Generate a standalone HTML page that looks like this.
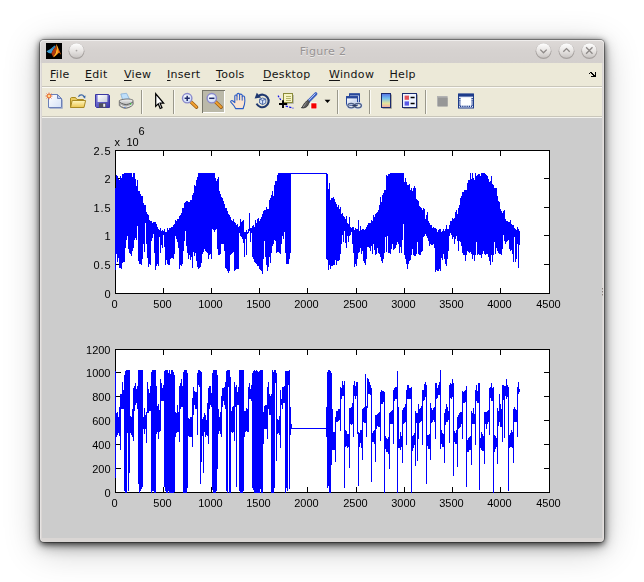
<!DOCTYPE html>
<html><head><meta charset="utf-8"><title>Figure 2</title>
<style>
html,body{margin:0;padding:0;background:#fff;}
body{width:644px;height:582px;overflow:hidden;position:relative;font-family:"DejaVu Sans","Liberation Sans",sans-serif;}
.win{position:absolute;left:40px;top:40px;width:564px;height:502px;border-radius:4px;background:#dad6d4;
 box-shadow:0 0 0 1px rgba(0,0,0,.30),0 1.5px 6px rgba(0,0,0,.75),0 4px 14px rgba(0,0,0,.36),0 7px 36px rgba(0,0,0,.23);overflow:hidden;}
.win:after{content:"";position:absolute;left:0;top:0;right:0;bottom:0;border-radius:4px;box-shadow:inset 0 1px 0 0 rgba(255,255,255,.55), inset 1px 0 0 0 rgba(255,255,255,.35), inset -1px 0 0 0 rgba(255,255,255,.25);pointer-events:none;}
.title{position:absolute;left:0;top:0;width:564px;height:23px;background:linear-gradient(#dedad8,#d6d2d0 45%,#d3cfcd);}
.title .t{position:absolute;left:0;right:0;top:5px;text-align:center;padding-left:2px;font-size:11px;letter-spacing:.3px;color:#979393;line-height:14px;text-shadow:0 1px 0 rgba(255,255,255,.55);}
.menubar{position:absolute;left:2px;top:23px;width:560px;height:23px;background:#ece9d8;}
.mi{position:absolute;top:5px;font-size:11px;letter-spacing:.3px;line-height:14px;color:#141414;white-space:nowrap;}
.mi u{text-decoration:underline;text-underline-offset:2px;text-decoration-thickness:1px;}
.sep1{position:absolute;left:2px;top:46px;width:560px;height:1px;background:#c9c6ba;}
.sep1b{position:absolute;left:2px;top:47px;width:560px;height:1px;background:#fbfaf6;}
.toolbar{position:absolute;left:2px;top:48px;width:560px;height:28px;background:#ece9d8;}
.sep2{position:absolute;left:2px;top:76px;width:560px;height:1px;background:#c9c6ba;}
.sep2b{position:absolute;left:2px;top:77px;width:560px;height:1px;background:#f4f3ee;}
.fig{position:absolute;left:2px;top:78px;width:560px;height:420px;background:#ccc;}
.plots{position:absolute;left:0;top:0;will-change:transform;}
.tb{position:absolute;left:0;top:0;}
</style></head><body>
<div class="win">
 <div class="title"><div class="t">Figure 2</div></div>
 <div class="menubar"><span class="mi" style="left:8px"><u>F</u>ile</span><span class="mi" style="left:43px"><u>E</u>dit</span><span class="mi" style="left:82px"><u>V</u>iew</span><span class="mi" style="left:125px"><u>I</u>nsert</span><span class="mi" style="left:174px"><u>T</u>ools</span><span class="mi" style="left:221px"><u>D</u>esktop</span><span class="mi" style="left:287px"><u>W</u>indow</span><span class="mi" style="left:347.5px"><u>H</u>elp</span></div>
 <div class="sep1"></div><div class="sep1b"></div>
 <div class="toolbar"></div>
 <div class="sep2"></div><div class="sep2b"></div>
 <div class="fig"></div>
</div>
<svg class="tb" width="644" height="582" viewBox="0 0 644 582">
<defs>
 <linearGradient id="gBtn" x1="0" y1="0" x2="0" y2="1"><stop offset="0" stop-color="#ffffff"/><stop offset=".55" stop-color="#e6e3e1"/><stop offset="1" stop-color="#c9c5c3"/></linearGradient>
 <linearGradient id="gPage" x1="0" y1="0" x2="1" y2="1"><stop offset="0" stop-color="#ffffff"/><stop offset="1" stop-color="#d4e0f6"/></linearGradient>
 <linearGradient id="gFold" x1="0" y1="0" x2="0" y2="1"><stop offset="0" stop-color="#fff8c0"/><stop offset="1" stop-color="#ecc650"/></linearGradient>
 <linearGradient id="gSave" x1="0" y1="0" x2="1" y2="1"><stop offset="0" stop-color="#8482e2"/><stop offset="1" stop-color="#3c38a6"/></linearGradient>
 <linearGradient id="gLbl" x1="0" y1="0" x2="1" y2="1"><stop offset="0" stop-color="#ffffff"/><stop offset="1" stop-color="#c8ccdc"/></linearGradient>
 <linearGradient id="gPrn" x1="0" y1="0" x2="0" y2="1"><stop offset="0" stop-color="#f4f4f4"/><stop offset="1" stop-color="#8c8c8c"/></linearGradient>
 <radialGradient id="gLens" cx=".4" cy=".35" r=".7"><stop offset="0" stop-color="#ffffff"/><stop offset="1" stop-color="#c4d4f6"/></radialGradient>
 <linearGradient id="gCbar" x1="0" y1="0" x2="0" y2="1"><stop offset="0" stop-color="#5470e6"/><stop offset=".35" stop-color="#74c0ee"/><stop offset=".7" stop-color="#e4e49c"/><stop offset="1" stop-color="#f2a6a6"/></linearGradient>
 <linearGradient id="gWin" x1="0" y1="0" x2="1" y2="1"><stop offset="0" stop-color="#ffffff"/><stop offset="1" stop-color="#b8c8e8"/></linearGradient>
 <linearGradient id="gMl" x1="0" y1="0" x2="1" y2="1"><stop offset="0" stop-color="#c8400c"/><stop offset=".5" stop-color="#ee7414"/><stop offset="1" stop-color="#a02808"/></linearGradient>
</defs>

<!-- title bar: matlab icon -->
<rect x="46" y="43" width="16" height="16" fill="#000"/>
<path d="M46.5 51.3L50.5 49.1L54.8 45.4L55.6 46.6L53 50L51.4 53.4L48.6 53.1Z" fill="#3a9bd2"/>
<path d="M50.5 49.1L54.8 45.4L53.4 48.6Z" fill="#2b78a8"/>
<path d="M51.4 53.4L53 50L55.6 46.6L56.4 44.1L56.7 48L55.6 53L53.3 57.2Z" fill="#b0380e"/>
<path d="M56.4 44.1C57.6 46.5 59.5 51 61.1 54.7C60.4 54 59.8 53 59.2 52.5C57.8 53.5 56.5 56 53.3 57.2L55.6 53L56.7 48Z" fill="#ee7a16"/>
<path d="M56.4 44.1L57.1 48.4L56 53L53.3 57.2L55 55.9L57.5 52.6L57.8 48Z" fill="#ffc62a"/>
<path d="M58.2 48.6C59 50.6 60 52.6 61.1 54.7C60.4 54 59.8 53 59.2 52.5Z" fill="#c24a0e"/>

<!-- title bar round buttons -->
<g>
 <circle cx="76.5" cy="51.2" r="7.9" fill="#a5a09e"/>
 <circle cx="76.5" cy="50.5" r="7.3" fill="url(#gBtn)"/>
 <circle cx="76.5" cy="50.6" r="0.9" fill="#a9a5a3"/>
 <circle cx="543.5" cy="51.2" r="7.9" fill="#a5a09e"/><circle cx="543.5" cy="50.5" r="7.3" fill="url(#gBtn)"/>
 <circle cx="566.5" cy="51.2" r="7.9" fill="#a5a09e"/><circle cx="566.5" cy="50.5" r="7.3" fill="url(#gBtn)"/>
 <circle cx="589.3" cy="51.2" r="7.9" fill="#a5a09e"/><circle cx="589.3" cy="50.5" r="7.3" fill="url(#gBtn)"/>
 <path d="M540.3 49.6 L543.5 52.8 L546.7 49.6" fill="none" stroke="#8d8987" stroke-width="1.3"/>
 <path d="M563.3 51.8 L566.5 48.6 L569.7 51.8" fill="none" stroke="#8d8987" stroke-width="1.3"/>
 <path d="M586.1 47.3 L592.5 53.7 M592.5 47.3 L586.1 53.7" fill="none" stroke="#8d8987" stroke-width="1.3"/>
</g>

<!-- menubar right arrow -->
<path shape-rendering="crispEdges" fill="#000" d="M590 72h2v1h-2zM589 73h1v1h-1zM591 73h2v1h-2zM592 74h2v1h-2zM593 75h2v1h-2zM595 72h1v5h-1zM591 76h5v1h-5z"/>
<!-- separators -->
<g stroke="#9a988b" stroke-width="1" shape-rendering="crispEdges">
 <path d="M141.5 90V114M173.5 90V114M337.5 90V114M369.5 90V114M425.5 90V114"/>
</g>
<g stroke="#fbfaf4" stroke-width="1" shape-rendering="crispEdges">
 <path d="M142.5 90V114M174.5 90V114M338.5 90V114M370.5 90V114M426.5 90V114"/>
</g>

<!-- New -->
<g>
 <path d="M49.5 108.5H62.5V99.5" fill="none" stroke="#aeb6cc" stroke-width="1"/>
 <path d="M48.5 94.5H57.5L61.5 98.5V107.5H48.5Z" fill="url(#gPage)" stroke="#6b80b8" stroke-width="1"/>
 <path d="M57.5 94.5V98.5H61.5Z" fill="#b9c8ea" stroke="#6b80b8" stroke-width="1" stroke-linejoin="round"/>
 <g stroke="#e4583a" stroke-width=".9"><path d="M49 92.6V99.4M45.6 96H52.4M46.6 93.6L51.4 98.4M51.4 93.6L46.6 98.4"/></g>
 <circle cx="49" cy="96" r="1.8" fill="#ffd79a" stroke="#ee7a2a" stroke-width=".9"/>
</g>

<!-- Open -->
<g>
 <path d="M70.5 107.5V98.2L71.5 97.5H75.5L77 99.5H83.5V102" fill="#e9c95e" stroke="#a98a22" stroke-width="1" stroke-linejoin="round"/>
 <path d="M70.5 107.5L72.2 100.5H85.6L84 107.5Z" fill="url(#gFold)" stroke="#a98a22" stroke-width="1" stroke-linejoin="round"/>
 <path d="M78.4 96.8C79.6 94.4 82.8 94.2 84 96.6" fill="none" stroke="#3a66a8" stroke-width="1.1"/>
 <path d="M82.6 96.6L85.6 95.4L85.1 98.8Z" fill="#3a66a8"/>
</g>

<!-- Save -->
<g>
 <path d="M95.5 94.5H108.5L109.5 95.5V107.5H96.5L95.5 106.5Z" fill="url(#gSave)" stroke="#3a36a0" stroke-width="1"/>
 <rect x="97.6" y="95" width="9.8" height="7" fill="url(#gLbl)"/>
 <rect x="99" y="103.2" width="7" height="4.4" fill="#50505e"/>
 <rect x="103.2" y="103.8" width="2" height="3" fill="#e8e8f0"/>
</g>

<!-- Print -->
<g>
 <path d="M122.6 99.6L120.8 94L126.6 93.3L129.4 99Z" fill="#bfe0fb" stroke="#86aed6" stroke-width=".8"/>
 <path d="M119.3 100.6C121.5 99 130.5 98.2 133 100.2L133.2 104.4C131 107.3 127 108.4 124.6 108.3C122.5 107.8 120.4 106.8 119.3 105.6Z" fill="url(#gPrn)" stroke="#6e6e6e" stroke-width=".9"/>
 <path d="M119.6 102.2C122 104 125 104.6 126.4 104.6C129 104.2 131.6 103 133 101.8" fill="none" stroke="#5c5c5c" stroke-width="1"/>
 <path d="M121 105.3C123 106.5 125 106.9 126.3 106.9C128.6 106.5 130.6 105.6 132 104.6" fill="none" stroke="#f4f4f4" stroke-width=".9"/>
 <circle cx="130.6" cy="103.9" r=".8" fill="#38c03c"/>
 <circle cx="124.8" cy="107.4" r=".7" fill="#4a78d8"/>
</g>

<!-- Arrow cursor -->
<path d="M155.7 93.8V106.4L158.3 103.9L160.2 108.5L162 107.7L160.1 103.2H163.6Z" fill="#fff" stroke="#000" stroke-width="1.25" stroke-linejoin="miter"/>

<!-- Zoom in -->
<g>
 <path d="M190.8 101.8L196.6 107.2" stroke="#9a5a10" stroke-width="3.4" stroke-linecap="round"/>
 <path d="M190.8 101.8L196.4 107" stroke="#f0a030" stroke-width="2" stroke-linecap="round"/>
 <circle cx="187.2" cy="98.2" r="4.7" fill="url(#gLens)" stroke="#8a8acc" stroke-width="1.4"/>
 <path d="M184.6 98.3H189.8M187.2 95.7V100.9" stroke="#1e2a6a" stroke-width="1.5"/>
</g>

<!-- Zoom out (pressed) -->
<g shape-rendering="crispEdges">
 <rect x="202" y="90" width="23" height="23" fill="#bbb9a9"/>
 <path d="M202.5 113V90.5H225" fill="none" stroke="#77766a" stroke-width="1"/>
 <path d="M203 112.5H224.5V91" fill="none" stroke="#ffffff" stroke-width="1"/>
</g>
<g>
 <path d="M215.4 101.8L221.2 107.2" stroke="#9a5a10" stroke-width="3.4" stroke-linecap="round"/>
 <path d="M215.4 101.8L221 107" stroke="#f0a030" stroke-width="2" stroke-linecap="round"/>
 <circle cx="211.8" cy="98.2" r="4.7" fill="url(#gLens)" stroke="#8a8acc" stroke-width="1.4"/>
 <path d="M209.2 98.3H214.4" stroke="#1e2a6a" stroke-width="1.5"/>
</g>

<!-- Pan hand -->
<path d="M235.6 108.6C234.6 106.4 232.4 103.8 230.8 102.2C230.2 101.2 231.4 100.2 232.6 100.8L234.8 102.6V96C234.8 94.6 236.8 94.6 237 96V94.4C237.2 93 239.4 93 239.6 94.4V95C239.8 93.8 241.8 93.8 242.2 95.2V96.6C242.6 95.6 244.4 95.8 244.6 97.2C245 100 245.2 102.4 244.4 104.6C244 105.8 243.4 107.2 243.2 108.6Z" fill="#fbe4cf" stroke="#2a5cc6" stroke-width="1.1" stroke-linejoin="round"/>
<path d="M237 96V100.4M239.6 95V100.2M242.2 96.6V100.6" stroke="#2a5cc6" stroke-width="1" fill="none"/>

<!-- Rotate 3D -->
<g>
 <path d="M258.2 96.2A6.3 6.3 0 1 1 256.6 103.6" fill="none" stroke="#1f3870" stroke-width="2.1"/>
 <path d="M254.6 98.4L256.8 92.8L261.2 97.4Z" fill="#1f3870"/>
 <path d="M259.6 99.2L262.6 98L265.8 99.2V103L262.6 104.6L259.6 103Z" fill="#dbe6fa" stroke="#3e5ea0" stroke-width=".9" stroke-linejoin="round"/>
 <path d="M259.6 99.2L262.6 100.4L265.8 99.2M262.6 100.4V104.6" fill="none" stroke="#3e5ea0" stroke-width=".9"/>
</g>

<!-- Data cursor -->
<g>
 <path d="M285 103.5H293.5V95" fill="none" stroke="#b9b9b0" stroke-width="1"/>
 <rect x="283.5" y="93.5" width="9" height="9" fill="#f6f4c4" stroke="#8a8a3a" stroke-width="1"/>
 <path d="M285.5 96.1H290.5M285.5 98.1H290.5M285.5 100.1H290.5" stroke="#a2a250" stroke-width=".8" shape-rendering="crispEdges"/>
 <path d="M278 95.6L281.4 101" stroke="#0a0aee" stroke-width="1.1" stroke-dasharray="2 1.2"/>
 <path d="M285.6 106L293.4 108.2" stroke="#0a0aee" stroke-width="1.1" stroke-dasharray="2.4 1.2"/>
 <path d="M279 104H287.2M283 100.2V108" stroke="#000" stroke-width="1.9"/>
</g>

<!-- Brush -->
<g>
 <path d="M315.8 93.8L308.6 101.2" stroke="#3b5fc0" stroke-width="3.2" stroke-linecap="round"/>
 <path d="M315.2 93.8L308.6 100.6" stroke="#b9c9f4" stroke-width="1" stroke-linecap="round"/>
 <path d="M309.4 101.8L307.6 100.2L305.8 102C303.6 103.4 303.4 106 301.4 107.8C304.4 108.6 307.8 106.8 308.4 104.2Z" fill="#5a5a5a" stroke="#2e2e2e" stroke-width=".8" stroke-linejoin="round"/>
 <path d="M306.4 102.8C304.8 104 304.4 105.8 303.2 107" fill="none" stroke="#a6a6a6" stroke-width=".8"/>
 <rect x="310.5" y="102.5" width="6.5" height="6.5" fill="#fff"/>
 <rect x="311.3" y="103.3" width="5.2" height="5.2" fill="#f40000"/>
</g>
<path d="M324.6 99.8H330.4L327.5 102.9Z" fill="#000"/>

<!-- Link plots -->
<g>
 <rect x="349.5" y="93.8" width="10" height="8.6" fill="#c9d6ef" stroke="#27479a" stroke-width="1"/>
 <rect x="349.5" y="93.6" width="10" height="1.9" fill="#27479a"/>
 <rect x="346.5" y="96.6" width="11" height="8.6" fill="url(#gWin)" stroke="#27479a" stroke-width="1"/>
 <rect x="346.5" y="96.4" width="11" height="2" fill="#27479a"/>
 <ellipse cx="351.2" cy="105.6" rx="3.4" ry="2.3" fill="none" stroke="#d9e2f2" stroke-width="2.6"/>
 <ellipse cx="358" cy="105.6" rx="3.4" ry="2.3" fill="none" stroke="#d9e2f2" stroke-width="2.6"/>
 <ellipse cx="351.2" cy="105.6" rx="3.4" ry="2.3" fill="none" stroke="#4d5f88" stroke-width="1.3"/>
 <ellipse cx="358" cy="105.6" rx="3.4" ry="2.3" fill="none" stroke="#4d5f88" stroke-width="1.3"/>
 <path d="M352.4 105.6H356.8" stroke="#2c3a5e" stroke-width="1.5"/>
</g>

<!-- Colorbar -->
<g>
 <path d="M382.5 108.5H391.5V94.5" fill="none" stroke="#a9a79b" stroke-width="1"/>
 <rect x="381.5" y="93.5" width="9" height="14" fill="url(#gCbar)" stroke="#1b2a6e" stroke-width="1"/>
</g>
<!-- Legend -->
<g>
 <path d="M403.5 108.5H417.5V94.5" fill="none" stroke="#a9a79b" stroke-width="1"/>
 <rect x="402.5" y="93.5" width="14" height="14" fill="#eef3ff" stroke="#1b2a6e" stroke-width="1"/>
 <rect x="404.6" y="95.6" width="4.4" height="4.2" fill="#e4525a"/>
 <rect x="404.6" y="101.4" width="4.4" height="4.2" fill="#5a5ae6"/>
 <path d="M410.6 97.6H414.6M410.6 103.6H414.6" stroke="#000" stroke-width="1.5"/>
</g>
<!-- Hide plot tools (disabled look) -->
<g>
 <rect x="437" y="96" width="10.6" height="10.4" fill="#b2b2b2"/>
 <rect x="438" y="97.6" width="9.6" height="8.8" fill="#979797"/>
</g>
<!-- Show plot tools -->
<g>
 <rect x="458.5" y="94" width="15" height="14" fill="#dfe6f6" stroke="#1d3b8a" stroke-width="1"/>
 <rect x="458.5" y="93.8" width="15" height="2.8" fill="#1d3b8a"/>
 <rect x="461" y="97.6" width="10" height="7.6" fill="#ffffff"/>
 <path d="M459.8 98V106M472.2 98V106" stroke="#1d3b8a" stroke-width="1.4" stroke-dasharray="1.2 1"/>
 <path d="M460 106.4H472" stroke="#1d3b8a" stroke-width="1.4" stroke-dasharray="1.2 1"/>
</g>
<!-- resize grip dots -->
<g fill="#8a807c"><rect x="602" y="288" width="1" height="1.4"/><rect x="602" y="291" width="1" height="1.4"/><rect x="602" y="294" width="1" height="1.4"/></g>
</svg>

<svg class="plots" width="644" height="582" viewBox="0 0 644 582" shape-rendering="crispEdges" font-family="Liberation Sans, Arial, sans-serif" font-size="11" fill="#000">
<rect x="115" y="150" width="435" height="144" fill="#fff"/>
<path d="M115.5 150V294M549.5 150V294M115 150.5H550M115 293.5H550M115.5 288V293M115.5 151V156M163.5 288V293M163.5 151V156M211.5 288V293M211.5 151V156M259.5 288V293M259.5 151V156M307.5 288V293M307.5 151V156M356.5 288V293M356.5 151V156M404.5 288V293M404.5 151V156M452.5 288V293M452.5 151V156M500.5 288V293M500.5 151V156M549.5 288V293M549.5 151V156M116 293.5H121M544 293.5H549M116 264.5H121M544 264.5H549M116 235.5H121M544 235.5H549M116 207.5H121M544 207.5H549M116 178.5H121M544 178.5H549M116 150.5H121M544 150.5H549" stroke="#000" stroke-width="1" fill="none"/>
<path d="M115.5 188V270M116.5 175V254M117.5 176V262M118.5 179V258M119.5 180V268M120.5 176V268M121.5 178V269M122.5 174V263M123.5 174V262M124.5 173V262M125.5 173V248M126.5 173V240M127.5 173V236M128.5 173V249M129.5 173V253M130.5 173V254M131.5 173V256M132.5 177V251M133.5 173V248M134.5 173V240M135.5 179V238M136.5 186V240M137.5 180V226M138.5 191V261M139.5 191V264M140.5 194V264M141.5 196V265M142.5 196V259M143.5 203V244M144.5 205V252M145.5 205V223M146.5 212V244M147.5 214V258M148.5 215V267M149.5 220V264M150.5 221V265M151.5 221V241M152.5 223V238M153.5 222V234M154.5 222V253M155.5 222V270M156.5 224V266M157.5 227V264M158.5 229V266M159.5 230V237M160.5 228V253M161.5 231V245M162.5 230V248M163.5 231V235M164.5 229V247M165.5 232V265M166.5 232V260M167.5 228V264M168.5 230V265M169.5 228V265M170.5 228V259M171.5 227V258M172.5 227V258M173.5 225V259M174.5 224V254M175.5 220V236M176.5 221V239M177.5 219V242M178.5 219V248M179.5 216V269M180.5 215V265M181.5 213V266M182.5 208V264M183.5 208V251M184.5 203V241M185.5 202V231M186.5 201V246M187.5 201V253M188.5 202V259M189.5 202V255M190.5 200V260M191.5 200V257M192.5 195V268M193.5 193V252M194.5 185V256M195.5 186V253M196.5 180V261M197.5 177V267M198.5 173V269M199.5 173V268M200.5 173V267M201.5 173V263M202.5 173V254M203.5 173V252M204.5 173V249M205.5 173V251M206.5 173V252M207.5 173V253M208.5 173V259M209.5 173V255M210.5 173V254M211.5 173V259M212.5 173V229M213.5 173V230M214.5 173V232M215.5 178V230M216.5 181V229M217.5 179V249M218.5 177V255M219.5 191V255M220.5 194V254M221.5 197V244M222.5 198V244M223.5 201V244M224.5 204V251M225.5 208V268M226.5 208V269M227.5 211V271M228.5 214V273M229.5 215V271M230.5 217V255M231.5 220V254M232.5 221V253M233.5 219V252M234.5 222V271M235.5 223V270M236.5 225V269M237.5 224V269M238.5 227V269M239.5 226V233M240.5 219V236M241.5 222V237M242.5 221V239M243.5 220V243M244.5 232V257M245.5 232V239M246.5 230V255M247.5 232V234M248.5 229V233M249.5 213V231M250.5 228V242M251.5 228V233M252.5 226V257M253.5 225V259M254.5 227V262M255.5 220V263M256.5 223V264M257.5 219V266M258.5 218V266M259.5 221V269M260.5 219V270M261.5 217V271M262.5 214V274M263.5 211V259M264.5 210V241M265.5 210V257M266.5 207V265M267.5 209V271M268.5 209V267M269.5 200V257M270.5 198V263M271.5 195V253M272.5 191V246M273.5 196V244M274.5 185V240M275.5 181V241M276.5 181V253M277.5 175V252M278.5 173V252M279.5 173V253M280.5 173V254M281.5 173V244M282.5 173V236M283.5 173V239M284.5 173V232M285.5 173V253M286.5 173V264M287.5 173V264M288.5 173V264M289.5 173V259M290.5 173V253M291.5 173V174M292.5 173V174M293.5 173V174M294.5 173V174M295.5 173V174M296.5 173V174M297.5 173V174M298.5 173V174M299.5 173V174M300.5 173V174M301.5 173V174M302.5 173V174M303.5 173V174M304.5 173V174M305.5 173V174M306.5 173V174M307.5 173V174M308.5 173V174M309.5 173V174M310.5 173V174M311.5 173V174M312.5 173V174M313.5 173V174M314.5 173V174M315.5 173V174M316.5 173V174M317.5 173V174M318.5 173V174M319.5 173V174M320.5 173V174M321.5 173V174M322.5 173V174M323.5 173V174M324.5 173V174M325.5 173V174M326.5 173V259M327.5 174V260M328.5 189V270M329.5 183V265M330.5 200V269M331.5 198V266M332.5 198V266M333.5 197V265M334.5 199V265M335.5 202V260M336.5 204V265M337.5 207V261M338.5 205V261M339.5 209V260M340.5 207V254M341.5 214V244M342.5 213V235M343.5 216V242M344.5 217V231M345.5 219V243M346.5 216V248M347.5 223V236M348.5 224V242M349.5 217V236M350.5 227V235M351.5 228V232M352.5 227V244M353.5 227V253M354.5 230V267M355.5 228V264M356.5 229V266M357.5 229V259M358.5 220V253M359.5 231V252M360.5 226V248M361.5 230V254M362.5 229V251M363.5 229V261M364.5 230V263M365.5 229V265M366.5 227V259M367.5 225V247M368.5 223V247M369.5 223V248M370.5 223V251M371.5 220V246M372.5 221V254M373.5 215V244M374.5 217V250M375.5 214V255M376.5 213V254M377.5 212V248M378.5 210V253M379.5 205V254M380.5 197V257M381.5 202V261M382.5 195V263M383.5 193V259M384.5 190V253M385.5 190V237M386.5 175V252M387.5 176V236M388.5 174V253M389.5 174V253M390.5 173V254M391.5 173V249M392.5 173V244M393.5 173V250M394.5 173V249M395.5 173V248M396.5 173V245M397.5 173V242M398.5 173V244M399.5 173V253M400.5 173V247M401.5 173V253M402.5 173V240M403.5 173V224M404.5 182V255M405.5 178V259M406.5 182V264M407.5 185V269M408.5 185V264M409.5 184V261M410.5 190V260M411.5 188V255M412.5 191V249M413.5 188V255M414.5 186V256M415.5 188V256M416.5 199V254M417.5 200V242M418.5 201V254M419.5 206V255M420.5 207V255M421.5 208V252M422.5 210V251M423.5 208V237M424.5 209V236M425.5 219V234M426.5 215V236M427.5 212V238M428.5 221V241M429.5 223V246M430.5 225V244M431.5 225V245M432.5 228V245M433.5 227V244M434.5 228V248M435.5 228V272M436.5 229V270M437.5 232V271M438.5 230V271M439.5 229V269M440.5 229V271M441.5 232V258M442.5 231V260M443.5 229V254M444.5 231V259M445.5 229V264M446.5 225V266M447.5 229V259M448.5 229V251M449.5 225V236M450.5 221V233M451.5 221V235M452.5 218V239M453.5 219V237M454.5 218V244M455.5 212V239M456.5 210V236M457.5 214V241M458.5 208V251M459.5 205V241M460.5 198V242M461.5 196V246M462.5 192V253M463.5 192V255M464.5 190V255M465.5 190V261M466.5 190V255M467.5 183V251M468.5 180V252M469.5 180V253M470.5 173V252M471.5 179V254M472.5 173V259M473.5 178V255M474.5 180V261M475.5 173V255M476.5 176V242M477.5 175V255M478.5 174V254M479.5 174V255M480.5 176V255M481.5 173V258M482.5 173V254M483.5 173V251M484.5 173V254M485.5 174V255M486.5 175V254M487.5 176V254M488.5 179V257M489.5 182V261M490.5 181V265M491.5 176V255M492.5 184V262M493.5 185V255M494.5 188V242M495.5 188V254M496.5 188V248M497.5 196V251M498.5 201V253M499.5 202V254M500.5 209V254M501.5 211V255M502.5 213V249M503.5 211V235M504.5 210V241M505.5 219V244M506.5 221V242M507.5 221V241M508.5 222V240M509.5 222V249M510.5 220V251M511.5 224V250M512.5 225V254M513.5 225V262M514.5 228V237M515.5 229V262M516.5 230V259M517.5 227V244M518.5 229V268M519.5 231V245" stroke="#00f" stroke-width="1" fill="none"/>
<text x="114.5" y="307.6" text-anchor="middle">0</text>
<text x="162.5" y="307.6" text-anchor="middle">500</text>
<text x="210.5" y="307.6" text-anchor="middle">1000</text>
<text x="258.5" y="307.6" text-anchor="middle">1500</text>
<text x="306.5" y="307.6" text-anchor="middle">2000</text>
<text x="355.5" y="307.6" text-anchor="middle">2500</text>
<text x="403.5" y="307.6" text-anchor="middle">3000</text>
<text x="451.5" y="307.6" text-anchor="middle">3500</text>
<text x="499.5" y="307.6" text-anchor="middle">4000</text>
<text x="548.5" y="307.6" text-anchor="middle">4500</text>
<text x="110.5" y="297.8" text-anchor="end">0</text>
<text x="110.5" y="268.8" text-anchor="end">0<tspan dx="0.9">.</tspan><tspan dx="0.9">5</tspan></text>
<text x="110.5" y="239.8" text-anchor="end">1</text>
<text x="110.5" y="211.8" text-anchor="end">1<tspan dx="0.9">.</tspan><tspan dx="0.9">5</tspan></text>
<text x="110.5" y="182.8" text-anchor="end">2</text>
<text x="110.5" y="154.8" text-anchor="end">2<tspan dx="0.9">.</tspan><tspan dx="0.9">5</tspan></text>
<text x="114.5" y="146">x</text><text x="126.4" y="146">10</text><text x="138.5" y="134.5">6</text>
<rect x="115" y="349" width="435" height="144" fill="#fff"/>
<path d="M115.5 349V493M549.5 349V493M115 349.5H550M115 492.5H550M115.5 487V492M115.5 350V355M163.5 487V492M163.5 350V355M211.5 487V492M211.5 350V355M259.5 487V492M259.5 350V355M307.5 487V492M307.5 350V355M356.5 487V492M356.5 350V355M404.5 487V492M404.5 350V355M452.5 487V492M452.5 350V355M500.5 487V492M500.5 350V355M549.5 487V492M549.5 350V355M116 492.5H121M544 492.5H549M116 468.5H121M544 468.5H549M116 444.5H121M544 444.5H549M116 420.5H121M544 420.5H549M116 396.5H121M544 396.5H549M116 372.5H121M544 372.5H549M116 349.5H121M544 349.5H549" stroke="#000" stroke-width="1" fill="none"/>
<path d="M115.5 371V478M116.5 413V437M117.5 412V435M118.5 417V433M119.5 407V436M120.5 394V450M121.5 394V409M122.5 382V409M123.5 390V409M124.5 375V491M125.5 371V493M126.5 370V493M127.5 370V433M128.5 370V491M129.5 370V473M130.5 416V433M131.5 417V435M132.5 409V437M133.5 388V441M134.5 386V411M135.5 383V405M136.5 389V403M137.5 386V409M138.5 370V484M139.5 370V493M140.5 370V491M141.5 370V489M142.5 370V487M143.5 417V429M144.5 408V434M145.5 415V429M146.5 412V443M147.5 382V413M148.5 389V413M149.5 393V411M150.5 386V411M151.5 372V493M152.5 370V491M153.5 370V491M154.5 370V493M155.5 370V493M156.5 386V434M157.5 406V432M158.5 404V439M159.5 410V432M160.5 379V431M161.5 383V401M162.5 388V401M163.5 385V401M164.5 371V487M165.5 370V491M166.5 370V493M167.5 370V493M168.5 373V491M169.5 370V493M170.5 374V493M171.5 370V493M172.5 370V493M173.5 372V493M174.5 375V492M175.5 412V437M176.5 413V433M177.5 405V432M178.5 412V432M179.5 386V442M180.5 383V409M181.5 379V407M182.5 386V407M183.5 372V493M184.5 370V493M185.5 370V493M186.5 370V493M187.5 373V488M188.5 418V436M189.5 419V437M190.5 417V437M191.5 417V437M192.5 398V447M193.5 387V415M194.5 391V405M195.5 392V409M196.5 392V409M197.5 373V435M198.5 370V385M199.5 370V387M200.5 371V484M201.5 372V462M202.5 419V436M203.5 417V473M204.5 413V432M205.5 415V437M206.5 420V435M207.5 403V436M208.5 388V444M209.5 386V409M210.5 386V405M211.5 393V407M212.5 373V490M213.5 370V493M214.5 370V493M215.5 370V493M216.5 370V491M217.5 375V469M218.5 409V434M219.5 417V431M220.5 412V434M221.5 396V437M222.5 388V407M223.5 388V401M224.5 387V405M225.5 382V409M226.5 371V491M227.5 370V493M228.5 370V387M229.5 370V493M230.5 377V493M231.5 411V432M232.5 407V433M233.5 406V432M234.5 382V441M235.5 387V407M236.5 385V487M237.5 392V405M238.5 387V405M239.5 370V491M240.5 370V493M241.5 370V493M242.5 370V493M243.5 370V491M244.5 411V437M245.5 411V432M246.5 408V431M247.5 409V432M248.5 387V432M249.5 383V399M250.5 389V399M251.5 385V401M252.5 373V488M253.5 371V490M254.5 370V493M255.5 371V493M256.5 370V493M257.5 371V493M258.5 372V493M259.5 371V493M260.5 370V489M261.5 370V493M262.5 370V493M263.5 412V444M264.5 406V429M265.5 405V429M266.5 405V429M267.5 387V439M268.5 382V409M269.5 394V415M270.5 396V415M271.5 394V493M272.5 370V493M273.5 372V493M274.5 370V488M275.5 370V383M276.5 373V461M277.5 419V434M278.5 420V433M279.5 416V435M280.5 390V448M281.5 399V405M282.5 387V409M283.5 387V403M284.5 386V403M285.5 371V493M286.5 371V488M287.5 371V491M288.5 371V385M289.5 370V489M290.5 407V435M291.5 424V429M292.5 428V429M293.5 428V429M294.5 428V429M295.5 428V429M296.5 428V429M297.5 428V429M298.5 428V429M299.5 428V429M300.5 428V429M301.5 428V429M302.5 428V429M303.5 428V429M304.5 428V429M305.5 428V429M306.5 428V429M307.5 428V429M308.5 428V429M309.5 428V429M310.5 428V429M311.5 428V429M312.5 428V429M313.5 428V429M314.5 428V429M315.5 428V429M316.5 428V429M317.5 428V429M318.5 428V429M319.5 428V429M320.5 428V429M321.5 428V429M322.5 428V429M323.5 428V429M324.5 428V429M325.5 428V429M326.5 407V437M327.5 372V488M328.5 370V486M329.5 370V493M330.5 371V493M331.5 373V465M332.5 409V450M333.5 432V450M334.5 432V450M335.5 417V462M336.5 411V422M337.5 411V422M338.5 409V421M339.5 409V420M340.5 387V431M341.5 388V399M342.5 381V396M343.5 385V396M344.5 381V488M345.5 430V447M346.5 431V446M347.5 434V448M348.5 434V447M349.5 408V468M350.5 408V424M351.5 407V425M352.5 403V424M353.5 385V437M354.5 381V396M355.5 386V399M356.5 382V396M357.5 382V434M358.5 432V486M359.5 433V447M360.5 430V443M361.5 430V448M362.5 409V460M363.5 408V422M364.5 407V423M365.5 374V423M366.5 406V437M367.5 378V408M368.5 379V394M369.5 382V394M370.5 385V395M371.5 388V482M372.5 433V442M373.5 431V442M374.5 430V444M375.5 415V462M376.5 415V429M377.5 414V426M378.5 413V427M379.5 412V427M380.5 392V441M381.5 390V404M382.5 391V404M383.5 391V402M384.5 392V493M385.5 436V449M386.5 438V452M387.5 439V452M388.5 437V454M389.5 413V469M390.5 412V424M391.5 411V424M392.5 410V424M393.5 390V444M394.5 388V401M395.5 387V399M396.5 387V399M397.5 371V493M398.5 407V448M399.5 439V448M400.5 432V450M401.5 436V447M402.5 410V463M403.5 408V424M404.5 407V423M405.5 404V422M406.5 390V445M407.5 385V399M408.5 385V399M409.5 388V399M410.5 388V399M411.5 387V493M412.5 436V451M413.5 435V448M414.5 433V445M415.5 411V466M416.5 413V423M417.5 413V461M418.5 404V439M419.5 409V423M420.5 408V422M421.5 406V421M422.5 390V445M423.5 390V401M424.5 384V400M425.5 382V397M426.5 385V484M427.5 435V446M428.5 435V449M429.5 434V449M430.5 403V460M431.5 408V423M432.5 410V422M433.5 408V420M434.5 407V422M435.5 383V439M436.5 383V399M437.5 388V398M438.5 385V395M439.5 382V395M440.5 370V449M441.5 430V444M442.5 433V447M443.5 434V447M444.5 413V463M445.5 409V425M446.5 404V422M447.5 407V422M448.5 411V420M449.5 385V443M450.5 383V398M451.5 384V399M452.5 379V397M453.5 383V476M454.5 431V442M455.5 433V444M456.5 430V444M457.5 417V467M458.5 415V429M459.5 413V428M460.5 412V427M461.5 412V424M462.5 391V439M463.5 392V403M464.5 391V403M465.5 390V402M466.5 386V487M467.5 440V452M468.5 438V452M469.5 437V450M470.5 436V450M471.5 411V465M472.5 413V424M473.5 408V424M474.5 414V424M475.5 390V445M476.5 385V401M477.5 391V403M478.5 383V403M479.5 383V490M480.5 438V448M481.5 432V450M482.5 434V451M483.5 436V451M484.5 412V464M485.5 412V424M486.5 412V429M487.5 411V424M488.5 410V422M489.5 388V435M490.5 387V398M491.5 383V401M492.5 388V401M493.5 387V493M494.5 435V452M495.5 436V449M496.5 438V447M497.5 408V464M498.5 411V426M499.5 394V422M500.5 404V427M501.5 409V427M502.5 385V442M503.5 385V400M504.5 386V438M505.5 386V396M506.5 379V399M507.5 385V397M508.5 387V491M509.5 435V448M510.5 433V447M511.5 430V447M512.5 432V448M513.5 409V463M514.5 407V422M515.5 409V422M516.5 410V422M517.5 387V437M518.5 382V394M519.5 389V392" stroke="#00f" stroke-width="1" fill="none"/>
<text x="114.5" y="506.6" text-anchor="middle">0</text>
<text x="162.5" y="506.6" text-anchor="middle">500</text>
<text x="210.5" y="506.6" text-anchor="middle">1000</text>
<text x="258.5" y="506.6" text-anchor="middle">1500</text>
<text x="306.5" y="506.6" text-anchor="middle">2000</text>
<text x="355.5" y="506.6" text-anchor="middle">2500</text>
<text x="403.5" y="506.6" text-anchor="middle">3000</text>
<text x="451.5" y="506.6" text-anchor="middle">3500</text>
<text x="499.5" y="506.6" text-anchor="middle">4000</text>
<text x="548.5" y="506.6" text-anchor="middle">4500</text>
<text x="110.5" y="496.8" text-anchor="end">0</text>
<text x="110.5" y="472.8" text-anchor="end">200</text>
<text x="110.5" y="448.8" text-anchor="end">400</text>
<text x="110.5" y="424.8" text-anchor="end">600</text>
<text x="110.5" y="400.8" text-anchor="end">800</text>
<text x="110.5" y="376.8" text-anchor="end">1000</text>
<text x="110.5" y="353.8" text-anchor="end">1200</text>
</svg>
</body></html>
